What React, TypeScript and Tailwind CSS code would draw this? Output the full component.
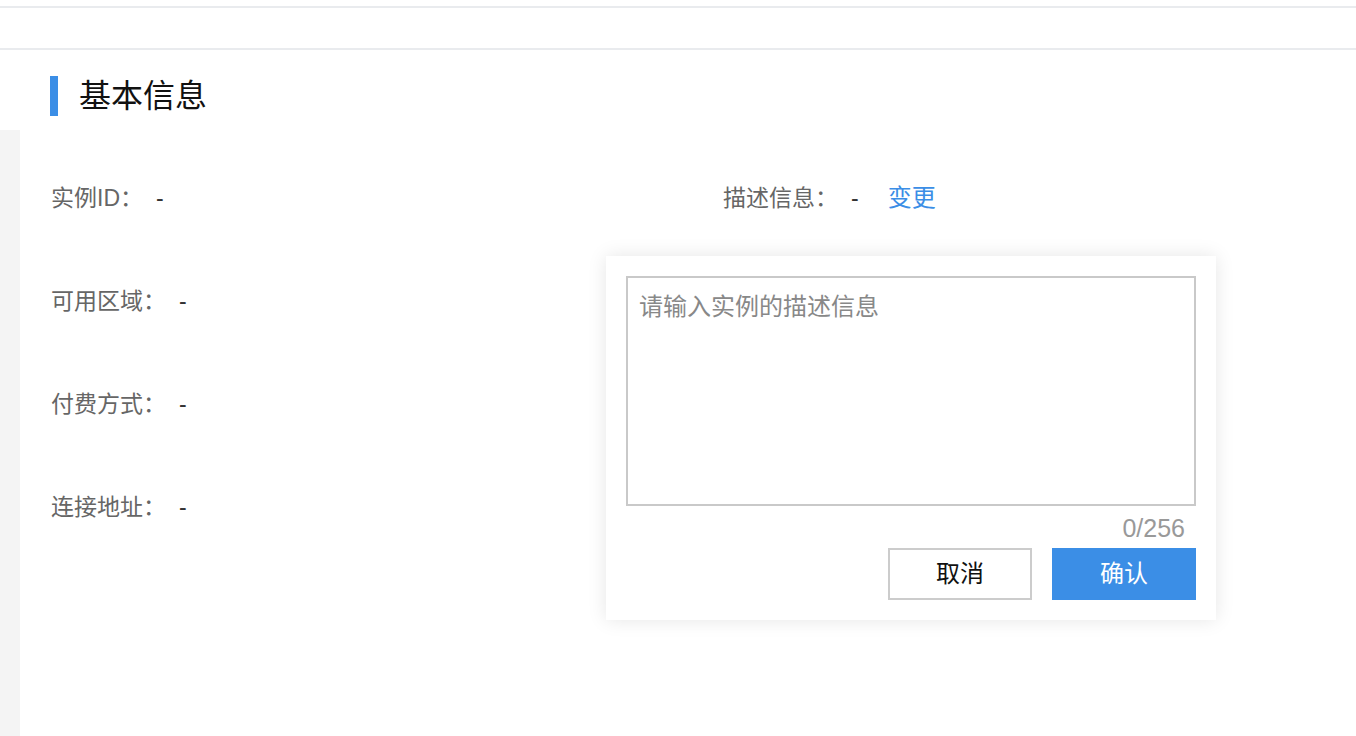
const font = { fontFamily: '"Liberation Sans", "Noto Sans CJK SC", sans-serif' }

const leftRows = [
  { label: "实例ID：", value: "-" },
  { label: "可用区域：", value: "-" },
  { label: "付费方式：", value: "-" },
  { label: "连接地址：", value: "-" },
]

function DescPopover() {
  return (
    <div className="absolute left-[-117px] top-[72px] w-[610px] bg-white p-5 shadow-[0_0_18px_rgba(0,0,0,0.1)] z-10">
      <textarea
        className="block w-[570px] h-[230px] border-2 border-[#c9c9c9] px-[11px] py-[13px] text-[24px] leading-[32px] text-[#333] placeholder:text-[#888] resize-none outline-none"
        style={font}
        placeholder="请输入实例的描述信息"
      />
      <div className="mt-[7px] pr-[11px] text-right text-[25px] leading-[30px] text-[#999]">0/256</div>
      <div className="mt-[5px] flex justify-end gap-5">
        <button className="w-[144px] h-[52px] border-2 border-[#cccccc] bg-white text-[24px] text-[#111]" style={font}>
          取消
        </button>
        <button className="w-[144px] h-[52px] bg-[#3b8ee6] text-[24px] text-white" style={font}>
          确认
        </button>
      </div>
    </div>
  )
}

export default function App() {
  return (
    <div className="w-[1356px] h-[736px] overflow-hidden bg-white" style={font}>
      <div className="pt-[6px]">
        <div className="h-[2px] bg-[#e9ebee]" />
        <div className="h-[40px]" />
        <div className="h-[2px] bg-[#e9ebee]" />
      </div>

      <div className="mt-[26px] flex items-center h-[40px] pl-[50px]">
        <div className="w-2 h-[40px] bg-[#3b8ee6]" />
        <h2 className="ml-[21px] text-[32px] leading-[40px] text-[#111]">基本信息</h2>
      </div>

      <div className="mt-[14px] flex h-[606px]">
        <div className="w-5 bg-[#f4f4f4]" />
        <div className="flex-1 pt-[54px] pl-[31px]">
          <div className="flex">
            <div className="w-[672px] flex flex-col gap-[75px]">
              {leftRows.map((row) => (
                <div key={row.label} className="flex h-[28px] items-center text-[23px]">
                  <span className="text-[#666]">{row.label}</span>
                  <span className="ml-[13px] text-[#333]">{row.value}</span>
                </div>
              ))}
            </div>
            <div className="relative flex h-[28px] items-center text-[23px]">
              <span className="text-[#666]">描述信息：</span>
              <span className="ml-[13px] text-[#333]">-</span>
              <button className="ml-[29px] text-[24px] text-[#3b8ee6]" style={font}>变更</button>
              <DescPopover />
            </div>
          </div>
        </div>
      </div>
    </div>
  )
}
